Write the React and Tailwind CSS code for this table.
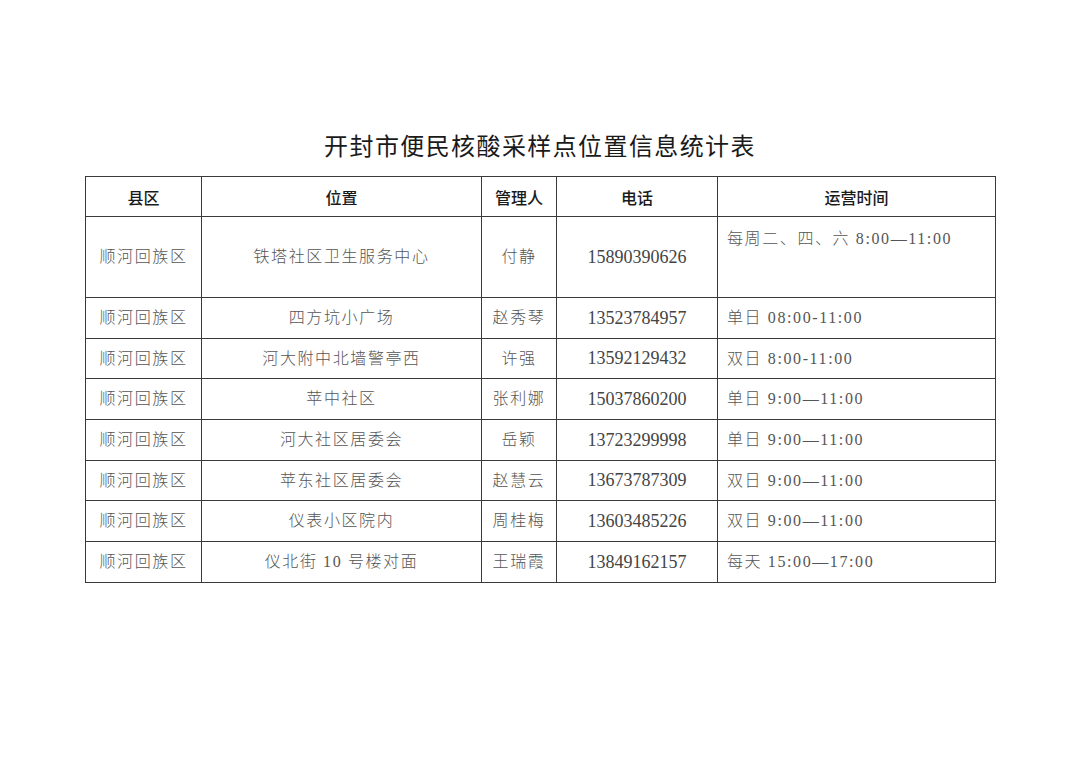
import React from "react";

const rows = [
  ["铁塔社区卫生服务中心", "付静", "15890390626", "每周二、四、六 8:00—11:00"],
  ["四方坑小广场", "赵秀琴", "13523784957", "单日 08:00-11:00"],
  ["河大附中北墙警亭西", "许强", "13592129432", "双日 8:00-11:00"],
  ["苹中社区", "张利娜", "15037860200", "单日 9:00—11:00"],
  ["河大社区居委会", "岳颖", "13723299998", "单日 9:00—11:00"],
  ["苹东社区居委会", "赵慧云", "13673787309", "双日 9:00—11:00"],
  ["仪表小区院内", "周桂梅", "13603485226", "双日 9:00—11:00"],
  ["仪北街 10 号楼对面", "王瑞霞", "13849162157", "每天 15:00—17:00"],
];

const heights = ["h-[81px]", "h-[41px]", "h-[40px]", "h-[41px]", "h-[41px]", "h-[40px]", "h-[41px]", "h-[41px]"];

const body = { fontFamily: '"Liberation Serif", "Noto Sans CJK SC", serif' };
const sans = { fontFamily: '"Noto Sans CJK SC", "Noto Sans", sans-serif' };

export default function App() {
  return (
    <div className="w-[1080px] h-[763px] bg-white">
      <div className="pt-[129px]">
        <div
          className="h-[32px] leading-[32px] text-center text-[24px] font-normal tracking-[1.4px] text-[#1a1a1a]"
          style={sans}
        >
          开封市便民核酸采样点位置信息统计表
        </div>
        <table className="ml-[85px] mt-[15px] table-fixed border-collapse w-[910px]">
          <colgroup>
            <col className="w-[116px]" />
            <col className="w-[280px]" />
            <col className="w-[75px]" />
            <col className="w-[161px]" />
            <col className="w-[278px]" />
          </colgroup>
          <thead>
            <tr className="h-[40px] text-[16px] text-[#1a1a1a]" style={sans}>
              <th className="border border-[#3a3a3a] font-medium">县区</th>
              <th className="border border-[#3a3a3a] font-medium">位置</th>
              <th className="border border-[#3a3a3a] font-medium">管理人</th>
              <th className="border border-[#3a3a3a] font-medium">电话</th>
              <th className="border border-[#3a3a3a] font-medium">运营时间</th>
            </tr>
          </thead>
          <tbody>
            {rows.map((r, i) => (
              <tr key={i} className={`${heights[i]} text-[16px] text-[#555]`} style={body}>
                <td className="border border-[#3a3a3a] text-center font-light tracking-[1.6px]">顺河回族区</td>
                <td className="border border-[#3a3a3a] text-center font-light tracking-[1.6px]">{r[0]}</td>
                <td className="border border-[#3a3a3a] text-center font-light tracking-[1.6px]">{r[1]}</td>
                <td className="border border-[#3a3a3a] text-center text-[18px] text-[#444]">{r[2]}</td>
                <td
                  className={`border border-[#3a3a3a] pl-[9px] text-left font-light tracking-[1.6px] ${
                    i === 0 ? "align-top pt-[10px]" : ""
                  }`}
                >
                  {r[3]}
                </td>
              </tr>
            ))}
          </tbody>
        </table>
      </div>
    </div>
  );
}
